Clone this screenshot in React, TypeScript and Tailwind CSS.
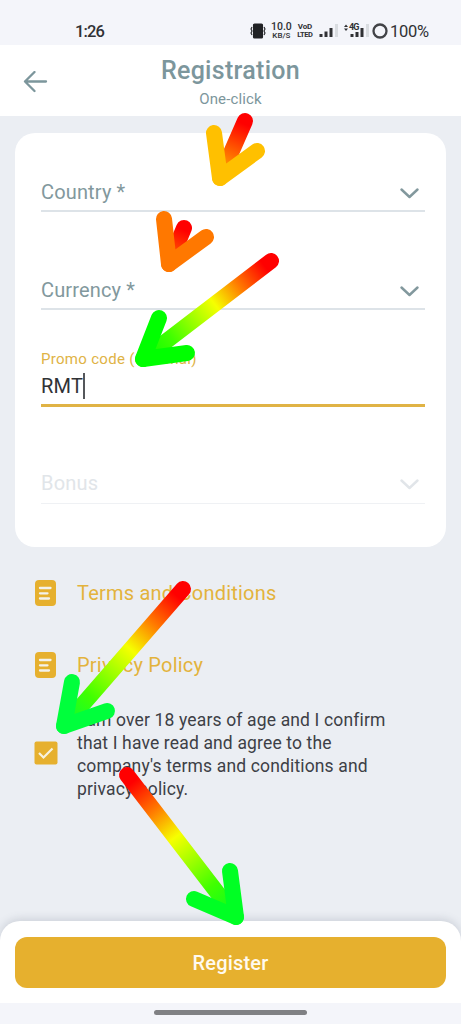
import React from "react";

type ArrowProps = {
  id: string;
  from: [number, number];
  to: [number, number];
  left: [number, number];
  right: [number, number];
  tip: string;
  mid?: string;
};

const arrows: ArrowProps[] = [
  { id: "country", from: [245, 121], to: [220, 178], left: [214, 133], right: [257, 151], tip: "#ffc000" },
  { id: "currency", from: [184, 228], to: [169, 264], left: [164, 219], right: [206, 237], tip: "#ff7800" },
  { id: "promo", from: [271, 261], to: [143, 359], left: [159, 318], right: [187, 353], tip: "#00ff00", mid: "#f6ff00" },
  { id: "agree", from: [183, 589], to: [64, 726], left: [72, 682], right: [107, 711], tip: "#00ff3c", mid: "#f6ff00" },
  { id: "submit", from: [127, 775], to: [236, 917], left: [230, 871], right: [194, 899], tip: "#00ff24", mid: "#f6ff00" },
];

function Arrow({ id, from, to, left, right, tip, mid }: ArrowProps) {
  return (
    <g fill="none" strokeWidth="16" strokeLinecap="round" strokeLinejoin="round">
      <linearGradient id={id} gradientUnits="userSpaceOnUse" x1={from[0]} y1={from[1]} x2={to[0]} y2={to[1]}>
        <stop offset="0.05" stopColor="#ff0000" />
        {mid && <stop offset="0.25" stopColor="#ff7a00" />}
        {mid && <stop offset="0.44" stopColor={mid} />}
        {mid && <stop offset="0.78" stopColor="#40ff00" />}
        <stop offset="1" stopColor={tip} />
      </linearGradient>
      <path d={`M${from} L${to}`} stroke={`url(#${id})`} />
      <path d={`M${left} L${to} L${right}`} stroke={tip} />
    </g>
  );
}

function Chevron() {
  return (
    <svg className="mt-[2px] mr-[6px] h-[11px] w-[19px]" viewBox="0 0 19 11" fill="none" stroke="currentColor" strokeWidth="2.4" strokeLinecap="round" strokeLinejoin="round">
      <path d="M1.5 1.5L9.5 9L17.5 1.5" />
    </svg>
  );
}

function SelectField({ label }: { label: string }) {
  return (
    <div className="flex h-[40px] items-center justify-between border-b-2 border-[#dde3e8] pt-[2px] text-[#82989d]">
      <span className="text-[20px] leading-6 tracking-[0.15px]">{label}</span>
      <Chevron />
    </div>
  );
}

function DocumentLink({ label }: { label: string }) {
  return (
    <a className="flex h-[26px] items-center text-[#e3b33c]">
      <svg className="h-[26px] w-[21px]" viewBox="0 0 21 26">
        <rect width="21" height="26" rx="4" fill="#e6b02e" />
        <path d="M5 8H15.5M5 13.3H12.5M5 18.5H14" stroke="#f3f2ec" strokeWidth="2.3" strokeLinecap="round" />
      </svg>
      <span className="ml-[21px] text-[20px] leading-6 tracking-[0.22px]">{label}</span>
    </a>
  );
}

function StatusBar() {
  return (
    <div className="flex h-[45px] items-end justify-between bg-[#f4f5fa] pr-[32px] pb-[3px] pl-[75px] text-[#303134]">
      <span className="text-[16.5px] leading-[21px] font-medium tracking-[-0.9px]">1:26</span>
      <div className="flex h-[22px] items-center">
        <svg className="h-[16px] w-[16px]" viewBox="0 0 16 16" fill="none" stroke="#202124" strokeWidth="1.1">
          <rect x="3.5" y="1" width="9" height="14" rx="1" fill="#202124" />
          <path d="M2 4L1 6L2 8L1 10L2 12M14 4L15 6L14 8L15 10L14 12" />
        </svg>
        <span className="ml-[5px] flex w-[21px] flex-col items-center">
          <span className="text-[10.5px] leading-[10px] font-medium">10.0</span>
          <span className="text-[8px] leading-[8px] font-medium">KB/S</span>
        </span>
        <span className="ml-[5px] flex w-[16px] flex-col items-center font-bold">
          <span className="text-[8px] leading-[8px] tracking-[-0.2px]">VoD</span>
          <span className="text-[7.5px] leading-[8px] tracking-[-0.4px]">LTED</span>
        </span>
        <svg className="ml-[6px] h-[16px] w-[20px]" viewBox="0 0 20 16">
          <path d="M2 11V14M7 8.5V14M12 5V14" stroke="#303134" strokeWidth="3" />
          <path d="M17.5 1V14" stroke="#d9dce0" strokeWidth="3" />
        </svg>
        <div className="relative ml-[4px] h-[16px] w-[27px]">
          <svg className="h-[16px] w-[27px]" viewBox="0 0 27 16">
            <path d="M1 4L3 1.5L5 4ZM1 5.5L3 8L5 5.5Z" fill="#303134" />
            <path d="M9 11V14M14 9V14M19 5V14" stroke="#303134" strokeWidth="3" />
            <path d="M24.5 1V14" stroke="#d9dce0" strokeWidth="3" />
          </svg>
          <span className="absolute top-0 left-[6px] text-[9px] leading-[9px] font-bold tracking-[-0.8px]">4G</span>
        </div>
        <svg className="ml-[2px] h-[16px] w-[16px]" viewBox="0 0 16 16">
          <circle cx="8" cy="8" r="6.5" fill="none" stroke="#424347" strokeWidth="2.3" />
        </svg>
        <span className="ml-[2px] pt-[1px] text-[16.5px] leading-[22px] tracking-[-0.2px]">100%</span>
      </div>
    </div>
  );
}

export default function App() {
  return (
    <div className="relative flex h-[1024px] w-[461px] flex-col overflow-hidden bg-[#ebeef3] font-[Roboto,sans-serif]">
      <StatusBar />
      <header className="flex h-[71px] bg-white text-[#7c969c]">
        <svg className="mt-[26px] ml-[23px] h-[22px] w-[25px]" viewBox="0 0 25 22" fill="none" stroke="currentColor" strokeWidth="2.3" strokeLinecap="round" strokeLinejoin="round">
          <path d="M23 10.5H2M11.5 1L2 10.5L11.5 20" />
        </svg>
        <div className="mr-[48px] flex flex-1 flex-col items-center pt-[11px]">
          <h1 className="text-[25px] leading-[30px] font-medium tracking-[0.3px]">Registration</h1>
          <p className="mt-[4px] text-[15px] leading-[18px] tracking-[0.15px]">One-click</p>
        </div>
      </header>
      <main className="flex flex-1 flex-col">
        <section className="mx-[15px] mt-[17px] h-[414px] rounded-[20px] bg-white pt-[39px] pr-[21px] pl-[26px]">
          <SelectField label="Country *" />
          <div className="mt-[58px]">
            <SelectField label="Currency *" />
          </div>
          <div className="mt-[39px] h-[58px] border-b-[3px] border-[#e0b345]">
            <p className="text-[15px] leading-[20px] tracking-[0.3px] text-[#e0b345]">Promo code (optional)</p>
            <div className="mt-[4px] flex h-[26px] items-center text-[20px] text-[#303236]">
              <span className="tracking-[0.2px]">RMT</span>
              <span className="h-[26px] w-[1.5px] bg-[#55575b]" />
            </div>
          </div>
          <div className="mt-[57px] flex h-[40px] items-center justify-between border-b border-[#eff1f4] pb-[1px] text-[#e1e5e9]">
            <span className="text-[20px] leading-6 tracking-[0.2px]">Bonus</span>
            <Chevron />
          </div>
        </section>
        <div className="mt-[33px] ml-[35px] flex flex-col gap-[46px]">
          <DocumentLink label="Terms and Conditions" />
          <DocumentLink label="Privacy Policy" />
        </div>
        <label className="mt-[31px] ml-[34px] flex items-center">
          <svg className="mb-[4px] h-[24px] w-[24px] shrink-0" viewBox="0 0 24 24">
            <rect x="0.5" y="0.5" width="23" height="23" rx="2" fill="#e6b02e" />
            <path d="M5 12L9.5 16.5L18.5 7.5" fill="none" stroke="#f7f2df" strokeWidth="2.2" />
          </svg>
          <p className="ml-[19px] text-[17.5px] leading-[23px] tracking-[0.15px] text-[#3d4046]">
            I am over 18 years of age and I confirm<br />
            that I have read and agree to the<br />
            company's terms and conditions and<br />
            privacy policy.
          </p>
        </label>
      </main>
      <footer className="h-[82px] rounded-t-[20px] bg-white px-[15px] pt-[16px] shadow-[0_-2px_8px_rgba(80,90,110,0.2)]">
        <button className="h-[51px] w-full rounded-[12px] bg-[#e6b02e] text-[20px] font-medium tracking-[0.2px] text-[#fffaf0]">Register</button>
      </footer>
      <div className="z-10 flex h-[21px] justify-center bg-[#f4f5fa] pt-[7px]">
        <span className="h-[5px] w-[153px] rounded-full bg-[#808184]" />
      </div>
      <svg className="pointer-events-none absolute inset-0 z-20 h-[1024px] w-[461px]" viewBox="0 0 461 1024">
        {arrows.map((arrow) => (
          <Arrow key={arrow.id} {...arrow} />
        ))}
      </svg>
    </div>
  );
}
